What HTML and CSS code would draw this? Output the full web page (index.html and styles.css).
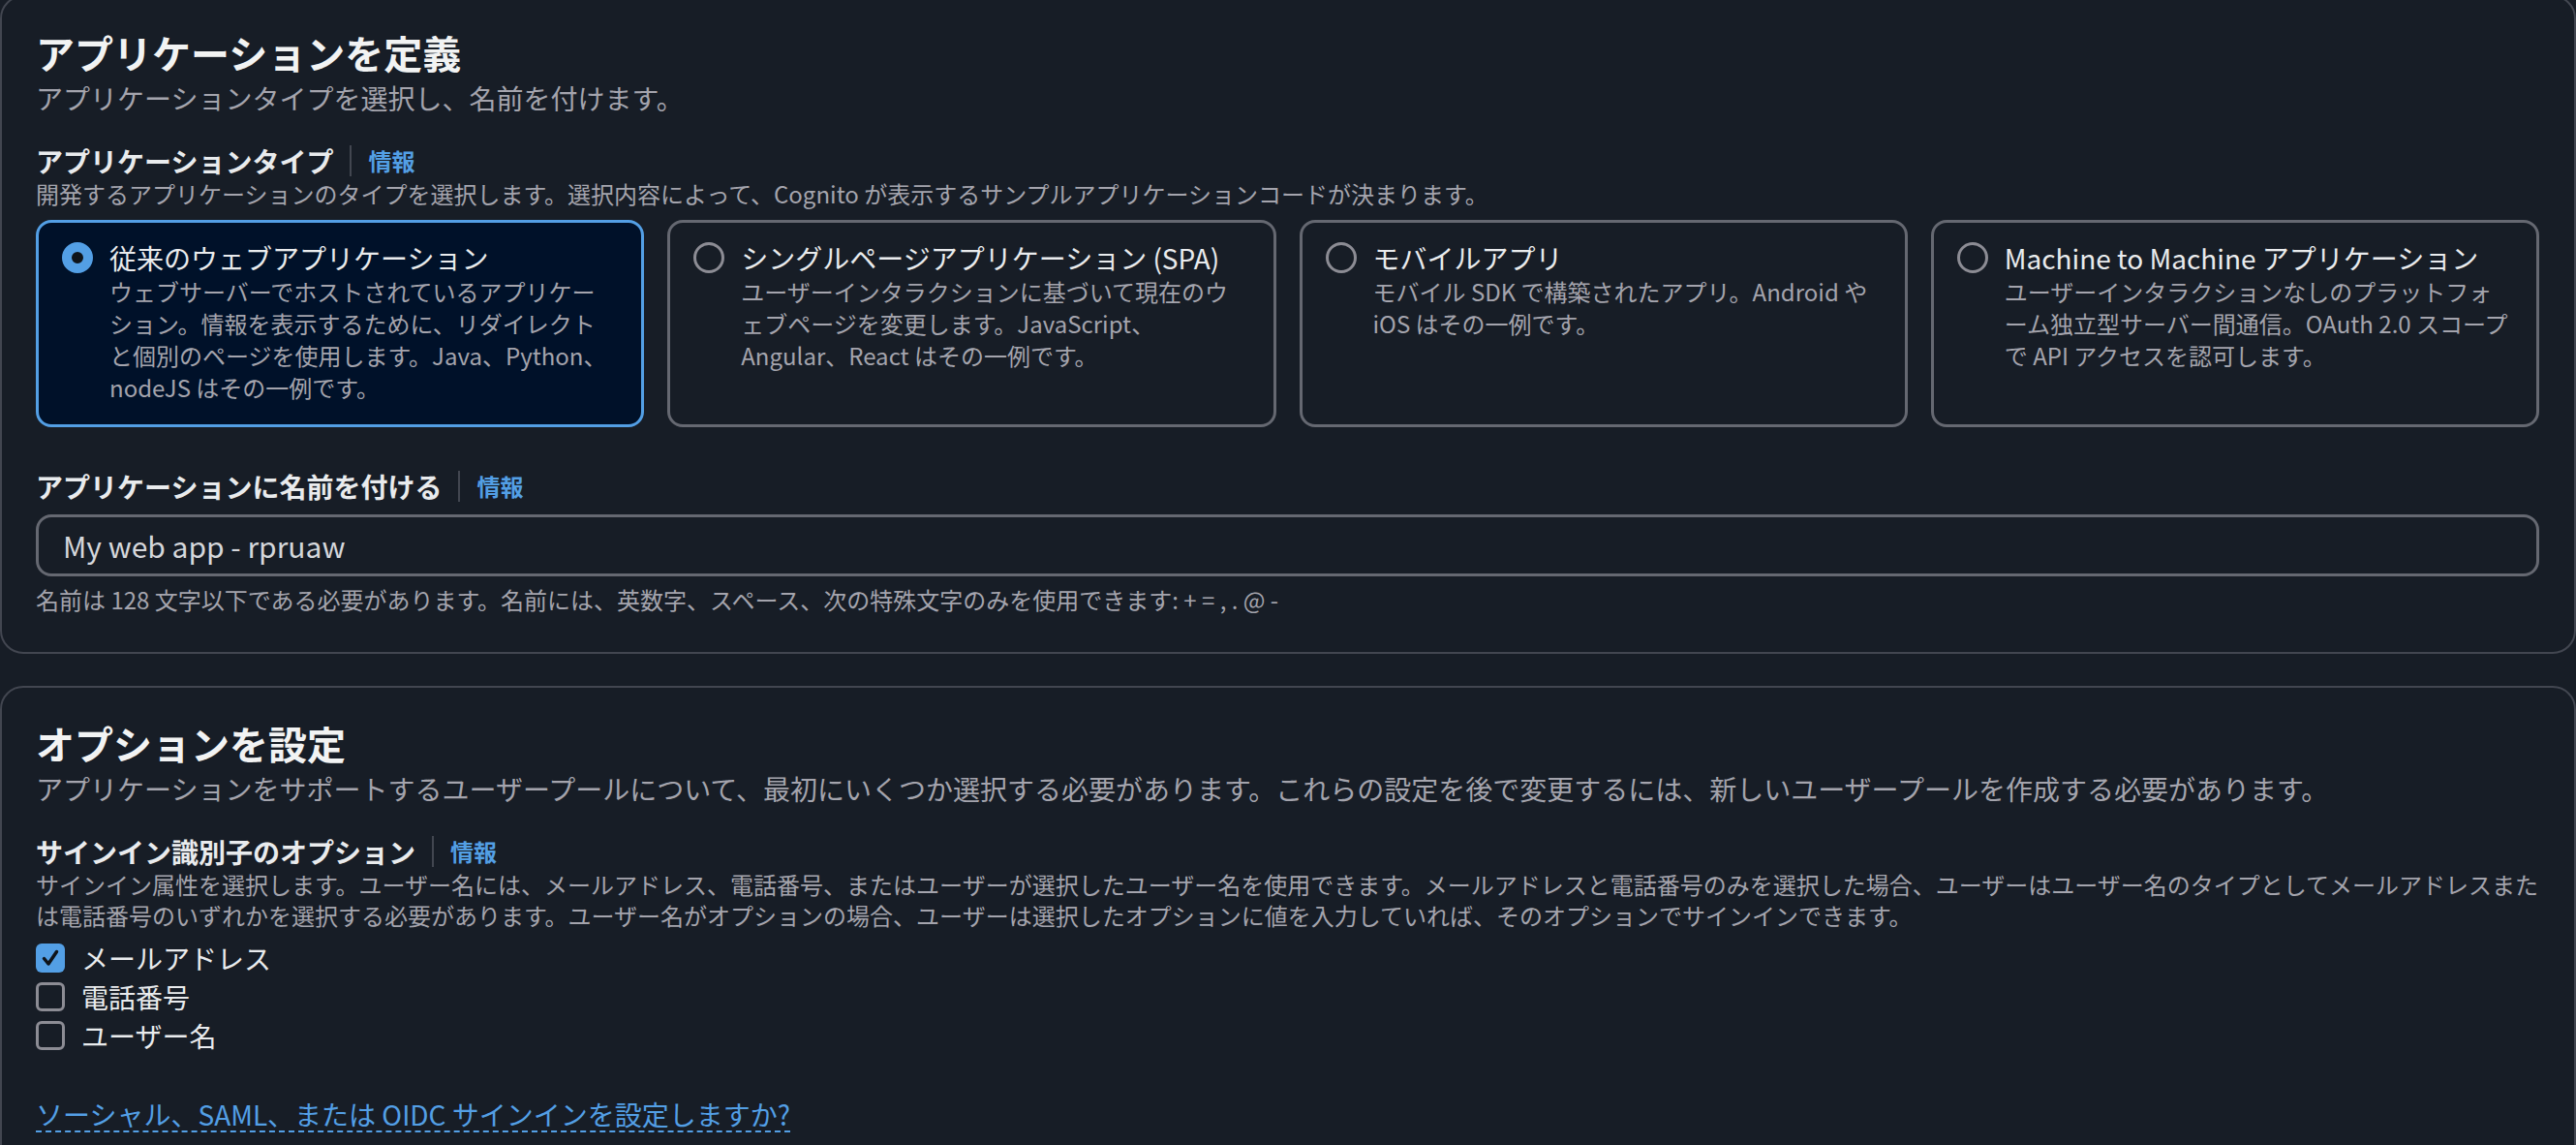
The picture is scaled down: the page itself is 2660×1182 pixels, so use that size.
FILE: index.html
```html
<!DOCTYPE html>
<html lang="ja">
<head>
    <meta charset="UTF-8">
    <meta name="viewport" content="width=device-width, initial-scale=1.0">
    <title>アプリケーションを定義</title>
    <link rel="stylesheet" href="styles.css">
</head>
<body>
    <div class="page">
        <section class="panel first">
            <h2 class="panel-title">アプリケーションを定義</h2>
            <p class="panel-desc">アプリケーションタイプを選択し、名前を付けます。</p>

            <div class="field">
                <div class="field-label">
                    <span>アプリケーションタイプ</span>
                    <span class="sep"></span>
                    <a class="info" href="#">情報</a>
                </div>
                <p class="field-desc">開発するアプリケーションのタイプを選択します。選択内容によって、Cognito が表示するサンプルアプリケーションコードが決まります。</p>

                <div class="tiles">
                    <label class="tile selected">
                        <span class="radio"></span>
                        <span class="tile-body">
                            <span class="tile-title">従来のウェブアプリケーション</span>
                            <span class="tile-desc">ウェブサーバーでホストされているアプリケーション。情報を表示するために、リダイレクトと個別のページを使用します。Java、Python、nodeJS はその一例です。</span>
                        </span>
                    </label>
                    <label class="tile">
                        <span class="radio"></span>
                        <span class="tile-body">
                            <span class="tile-title">シングルページアプリケーション (SPA)</span>
                            <span class="tile-desc">ユーザーインタラクションに基づいて現在のウェブページを変更します。JavaScript、Angular、React はその一例です。</span>
                        </span>
                    </label>
                    <label class="tile">
                        <span class="radio"></span>
                        <span class="tile-body">
                            <span class="tile-title">モバイルアプリ</span>
                            <span class="tile-desc">モバイル SDK で構築されたアプリ。Android や iOS はその一例です。</span>
                        </span>
                    </label>
                    <label class="tile">
                        <span class="radio"></span>
                        <span class="tile-body">
                            <span class="tile-title">Machine to Machine アプリケーション</span>
                            <span class="tile-desc">ユーザーインタラクションなしのプラットフォーム独立型サーバー間通信。OAuth 2.0 スコープで API アクセスを認可します。</span>
                        </span>
                    </label>
                </div>
            </div>

            <div class="field name-field">
                <div class="field-label">
                    <span>アプリケーションに名前を付ける</span>
                    <span class="sep"></span>
                    <a class="info" href="#">情報</a>
                </div>
                <input type="text" class="text-input" value="My web app - rpruaw">
                <p class="constraint">名前は 128 文字以下である必要があります。名前には、英数字、スペース、次の特殊文字のみを使用できます: + = , . @ -</p>
            </div>
        </section>

        <section class="panel">
            <h2 class="panel-title">オプションを設定</h2>
            <p class="panel-desc">アプリケーションをサポートするユーザープールについて、最初にいくつか選択する必要があります。これらの設定を後で変更するには、新しいユーザープールを作成する必要があります。</p>

            <div class="field">
                <div class="field-label">
                    <span>サインイン識別子のオプション</span>
                    <span class="sep"></span>
                    <a class="info" href="#">情報</a>
                </div>
                <p class="field-desc">サインイン属性を選択します。ユーザー名には、メールアドレス、電話番号、またはユーザーが選択したユーザー名を使用できます。メールアドレスと電話番号のみを選択した場合、ユーザーはユーザー名のタイプとしてメールアドレスまたは電話番号のいずれかを選択する必要があります。ユーザー名がオプションの場合、ユーザーは選択したオプションに値を入力していれば、そのオプションでサインインできます。</p>

                <div class="checks">
                    <label class="check">
                        <span class="box checked">
                            <svg viewBox="0 0 30 30" width="30" height="30"><polyline points="8.5,15.5 13,21 21.5,8.5" fill="none" stroke="#0f141a" stroke-width="3.5" stroke-linecap="round" stroke-linejoin="round"/></svg>
                        </span>
                        <span>メールアドレス</span>
                    </label>
                    <label class="check">
                        <span class="box"></span>
                        <span>電話番号</span>
                    </label>
                    <label class="check">
                        <span class="box"></span>
                        <span>ユーザー名</span>
                    </label>
                </div>
            </div>

            <a class="expand-link" href="#">ソーシャル、SAML、または OIDC サインインを設定しますか?</a>
        </section>
    </div>
</body>
</html>
```

FILE: styles.css
```css
html, body {
    overflow: hidden;
}

body {
    font-family: "Noto Sans CJK JP", "Noto Sans", sans-serif;
    background-color: #171d26;
    color: #e9ebed;
    margin: 0;
    padding: 0;
}

.page {
    display: flex;
    flex-direction: column;
    gap: 33px;
    margin-top: -5px;
}

.panel {
    display: flex;
    flex-direction: column;
    border: 2px solid #424650;
    border-radius: 24px;
    padding: 33px 36px 38px 35px;
}

.panel-title {
    font-size: 40px;
    line-height: 48px;
    font-weight: 700;
    color: #f2f3f3;
    margin: 0;
}

.panel-desc {
    font-size: 28px;
    line-height: 40px;
    color: #a4a4ad;
    margin: 3px 0 0;
}

.field {
    display: flex;
    flex-direction: column;
    margin-top: 27px;
}

.name-field {
    margin-top: 43px;
}

.field-label {
    display: flex;
    align-items: center;
    font-size: 28px;
    line-height: 36px;
    font-weight: 700;
    color: #e9ebed;
}

.sep {
    width: 2px;
    height: 32px;
    background-color: #424650;
    margin: 0 17px;
}

.info {
    font-size: 24px;
    font-weight: 700;
    color: #539fe5;
    text-decoration: none;
}

.field-desc {
    font-size: 24px;
    line-height: 32px;
    color: #a4a4ad;
    margin: 0;
    line-break: loose;
}

.tiles {
    display: grid;
    grid-template-columns: repeat(4, 1fr);
    gap: 24px;
    margin-top: 11px;
}

.tile {
    display: flex;
    gap: 17px;
    border: 3px solid #656871;
    border-radius: 16px;
    padding: 18px 25px 22px 24px;
    cursor: pointer;
}

.tile.selected {
    border-color: #539fe5;
    background-color: #001129;
}

.radio {
    flex: none;
    width: 32px;
    height: 32px;
    box-sizing: border-box;
    border: 3px solid #8c8c94;
    border-radius: 50%;
    margin-top: 2px;
}

.tile.selected .radio {
    border: 10px solid #539fe5;
    background-color: #0f141a;
}

.tile-body {
    display: flex;
    flex-direction: column;
    min-width: 0;
}

.tile-title {
    font-size: 28px;
    line-height: 36px;
    color: #e9ebed;
}

.tile-desc {
    font-size: 24px;
    line-height: 33px;
    color: #a4a4ad;
    line-break: loose;
}

.text-input {
    margin-top: 11px;
    height: 64px;
    box-sizing: border-box;
    border: 3px solid #656871;
    border-radius: 16px;
    background-color: #171d26;
    color: #d5d7db;
    font-family: inherit;
    font-size: 30px;
    padding: 0 25px;
    outline: none;
}

.constraint {
    font-size: 24px;
    line-height: 32px;
    color: #a4a4ad;
    margin: 8px 0 0;
}

.checks {
    display: flex;
    flex-direction: column;
    margin-top: 8px;
}

.check {
    display: flex;
    align-items: center;
    gap: 17px;
    font-size: 28px;
    line-height: 40px;
    color: #e9ebed;
}

.box {
    flex: none;
    display: flex;
    width: 30px;
    height: 30px;
    box-sizing: border-box;
    border: 3px solid #8c8c94;
    border-radius: 6px;
}

.box.checked {
    border: none;
    background-color: #539fe5;
}

.expand-link {
    align-self: flex-start;
    margin-top: 41px;
    font-size: 28px;
    line-height: 40px;
    color: #539fe5;
    text-decoration: underline dashed 2px;
    text-underline-offset: 5px;
}
```
